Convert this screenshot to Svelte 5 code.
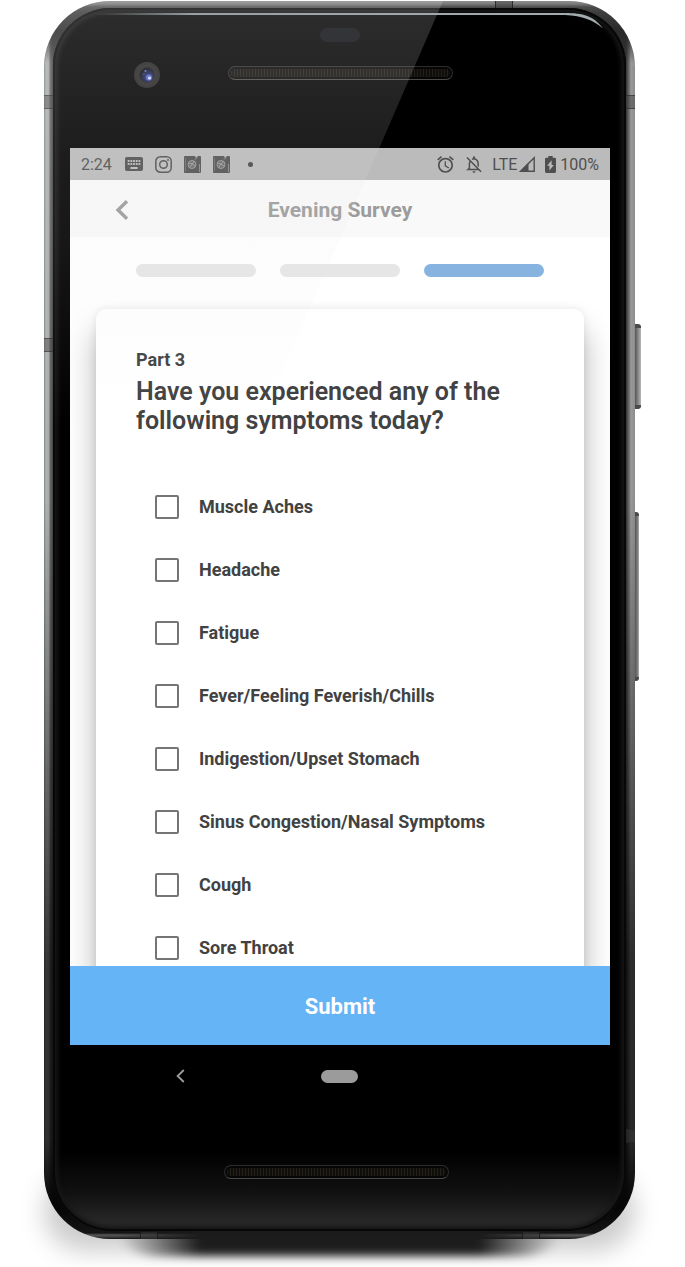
<script>
  const symptoms = [
    'Muscle Aches',
    'Headache',
    'Fatigue',
    'Fever/Feeling Feverish/Chills',
    'Indigestion/Upset Stomach',
    'Sinus Congestion/Nasal Symptoms',
    'Cough',
    'Sore Throat'
  ];
  const steps = [1, 2, 3];
  const current = 3;
  let selected = $state([]);
</script>

<main class="stage">
  <div class="phone">
    <div class="side power"></div>
    <div class="side volume"></div>
    <div class="glass">
      <div class="top-bezel">
        <div class="sensor"></div>
        <div class="camera-row">
          <svg class="camera" viewBox="0 0 26 26" aria-hidden="true">
            <defs>
              <radialGradient id="lens" cx="60%" cy="65%" r="60%">
                <stop offset="0" stop-color="#4450a8" />
                <stop offset="0.5" stop-color="#1c2250" />
                <stop offset="1" stop-color="#0c0d14" />
              </radialGradient>
            </defs>
            <circle cx="13" cy="13" r="13" fill="#262424" />
            <circle cx="13" cy="13" r="9.5" fill="none" stroke="#2e2c2c" />
            <circle cx="13" cy="13" r="7.5" fill="url(#lens)" />
            <circle cx="15" cy="15.5" r="3" fill="#5567d0" />
            <circle cx="15.5" cy="16" r="1.6" fill="#d3dcff" />
            <circle cx="11.5" cy="9" r="1.1" fill="#5b70c0" />
            <circle cx="10" cy="12" r="0.8" fill="#3a4c98" />
          </svg>
          <div class="speaker"></div>
        </div>
      </div>

      <section class="screen">
        <div class="status">
          <span class="clock">2:24</span>
          <svg width="18" height="14" viewBox="2 5 20 14" preserveAspectRatio="none" aria-hidden="true"><path fill="currentColor" d="M20 5H4c-1.1 0-1.99.9-1.99 2L2 17c0 1.1.9 2 2 2h16c1.1 0 2-.9 2-2V7c0-1.1-.9-2-2-2zm-9 3h2v2h-2V8zm0 3h2v2h-2v-2zM8 8h2v2H8V8zm0 3h2v2H8v-2zm-1 2H5v-2h2v2zm0-3H5V8h2v2zm9 7H8v-2h8v2zm0-4h-2v-2h2v2zm0-3h-2V8h2v2zm3 3h-2v-2h2v2zm0-3h-2V8h2v2z" /></svg>
          <svg width="17" height="17" viewBox="0 0 17 17" fill="none" stroke="currentColor" stroke-width="1.5" aria-hidden="true"><rect x="0.8" y="0.8" width="15.4" height="15.4" rx="4.5" /><circle cx="8.5" cy="8.5" r="3.8" /><circle cx="13" cy="4.1" r="1" fill="currentColor" stroke="none" /></svg>
          {#each [1, 2] as n (n)}
            <svg width="17" height="17" viewBox="0 0 17 17" aria-hidden="true">
              <path fill="currentColor" d="M1 0h10l1 2 2-2h2a1 1 0 0 1 1 1v15a1 1 0 0 1-1 1H1a1 1 0 0 1-1-1V1a1 1 0 0 1 1-1z" />
              <circle cx="8" cy="8.5" r="4" fill="#666" stroke="#9a9a9a" stroke-width="1" />
              <path d="M5 7l3 1 3-3M6 11l2-3 3 2M11 3.5l2-2" stroke="#a5a5a5" stroke-width="0.9" fill="none" />
              <path d="M15.500 8v8" stroke="#8d8d8d" stroke-width="0.900" />
              <path d="M1.5 2v13" stroke="#777" stroke-width="0.8" />
            </svg>
          {/each}
          <span class="dot"></span>
          <span class="spacer"></span>
          <svg width="17" height="17" viewBox="2 1.8 20 20.4" aria-hidden="true"><path fill="currentColor" d="M22 5.72l-4.6-3.86-1.29 1.53 4.6 3.86L22 5.72zM7.88 3.39L6.6 1.86 2 5.71l1.29 1.53 4.59-3.85zM12.5 8H11v6l4.75 2.85.75-1.23-4-2.37V8zM12 4c-4.97 0-9 4.03-9 9s4.02 9 9 9c4.97 0 9-4.03 9-9s-4.03-9-9-9zm0 16c-3.87 0-7-3.13-7-7s3.13-7 7-7 7 3.13 7 7-3.13 7-7 7z" /></svg>
          <svg width="16" height="17" viewBox="0 0 16 17" fill="none" stroke="currentColor" stroke-width="1.5" aria-hidden="true"><path d="M1 1.5l14 14.3M3.9 5.6c-.4.8-.5 1.500-.5 2.400v4.300L2 13.500h10.500M6 3.300C7 2.700 9 2.600 10.300 3.600c1.400 1 1.900 2.500 1.900 4.400v2.500" /><path d="M8 .5v2" stroke-width="2" /><path d="M6.500 15.200h3a1.500 1.500 0 0 1-3 0z" fill="currentColor" stroke="none" /></svg>
          <span class="network">LTE
            <svg width="16" height="16" viewBox="0 0 16 16" aria-hidden="true"><path d="M1.800 15.200H15.200V1.800z" fill="none" stroke="currentColor" stroke-width="1.400" /><path d="M0 16L9.500 6.500V16z" fill="currentColor" /></svg>
          </span>
          <span class="battery">
            <svg width="11" height="17" viewBox="7 2 10 20" preserveAspectRatio="none" aria-hidden="true"><path fill="currentColor" d="M15.67 4H14V2h-4v2H8.33C7.6 4 7 4.6 7 5.33v15.33C7 21.4 7.6 22 8.33 22h7.33c.74 0 1.34-.6 1.34-1.33V5.33C17 4.6 16.4 4 15.67 4zM11 19v-5.500H9L13 7v5.500h2L11 19z" /></svg>
            100%
          </span>
        </div>

        <header class="bar">
          <button class="back" type="button" aria-label="Back">
            <svg width="14" height="20" viewBox="0 0 14 20" fill="none" stroke="currentColor" stroke-width="3.400" aria-hidden="true"><path d="M12 1.200L3 10l9 8.800" /></svg>
          </button>
          <h1>Evening Survey</h1>
        </header>

        <div class="content">
          <div class="progress">
            {#each steps as step (step)}
              <span class:active={step === current}></span>
            {/each}
          </div>
          <form class="card" id="survey">
            <p class="part">Part {current}</p>
            <h2>Have you experienced any of the following symptoms today?</h2>
            <div class="options">
              {#each symptoms as symptom (symptom)}
                <label>
                  <input type="checkbox" value={symptom} bind:group={selected} />
                  <span>{symptom}</span>
                </label>
              {/each}
            </div>
          </form>
        </div>
        <button class="submit" type="submit" form="survey">Submit</button>
      </section>

      <div class="bottom-bezel">
        <div class="softkeys">
          <button type="button" aria-label="System back">
            <svg width="9" height="14" viewBox="0 0 9 14" fill="none" stroke="currentColor" stroke-width="1.800" aria-hidden="true"><path d="M7.800 1L1.600 7l6.200 6" /></svg>
          </button>
          <button class="home" type="button" aria-label="Home"></button>
          <span></span>
        </div>
        <div class="speaker"></div>
      </div>
    </div>
    <div class="band left b1"></div>
    <div class="band left b2"></div>
    <div class="band right b1"></div>
    <div class="band right b3"></div>
    <div class="band top"></div>
    <div class="band bottom b4"></div>
    <div class="band bottom b5"></div>
    <div class="gloss"></div>
    <div class="shine"></div>
    <svg class="shine-end" viewBox="0 0 38 16" aria-hidden="true"><path d="M0 0C18 0 29 3 38 15.500 28 7 18 3 0 2z" fill="#a2acae" /></svg>
  </div>
</main>

<style>
  :global(body) {
    background: #fff;
  }
  * {
    box-sizing: border-box;
  }
  .stage {
    padding: 1px 50px 27px 44px;
    overflow: hidden;
    font-family: Roboto, 'Liberation Sans', sans-serif;
    color: #424242;
  }
  button {
    font: inherit;
    border: 0;
    padding: 0;
    background: none;
    color: inherit;
    display: block;
  }
  h1,
  h2,
  p {
    margin: 0;
  }

  /* Metal frame */
  .phone {
    position: relative;
    z-index: 0;
    padding: 7px 9px 8px;
    border-radius: 66px;
    background:
      linear-gradient(to top, #1c1c1c 0, #4a4a4a 2px, #6c6c6c 4px, #1a1a1a 6px, #080808 30px, transparent 100px),
      linear-gradient(#8c9090 0, #7a7a7a 3px, #4c4c4c 6px, #3c3c3c 12px, #2a2a2a 30px, transparent 62px),
      linear-gradient(transparent 40%, rgba(0, 0, 0, 0.7) 78%, rgba(0, 0, 0, 0.75)),
      linear-gradient(to right, #808585 0, #b2b5b5 2px, #a6a9a9 5px, #686a6a 6px, #444 9px, #222 50%, #333 calc(100% - 9px), #6c6c6c calc(100% - 6px), #9a9a9a calc(100% - 4px), #8c8c8c 100%);
  }
  .phone::before,
  .phone::after {
    content: '';
    position: absolute;
    z-index: -2;
  }
  .phone::before {
    left: 76px;
    right: 76px;
    bottom: -17px;
    height: 40px;
    border-radius: 40px / 20px;
    background: linear-gradient(to right, transparent, #222 80px, #222 calc(100% - 80px), transparent);
    filter: blur(4px);
  }
  .phone::after {
    left: 0;
    right: 0;
    bottom: -12px;
    height: 80px;
    border-radius: 40px;
    background: rgba(0, 0, 0, 0.2);
    filter: blur(12px);
  }
  .glass {
    border-radius: 58px;
    background: linear-gradient(to top, #2e2e2e 0, #242424 14px, #121212 36px, #000 80px);
    box-shadow:
      inset 0 0 0 2px #070707,
      inset 0 0 4px 5px #161616;
  }
  .side {
    position: absolute;
    z-index: -1;
    left: 100%;
    border-radius: 0 3px 3px 0;
    border-block: 4px solid #4a4a4a;
    background: linear-gradient(to right, #555, #858585 3px, #b5b8b8);
  }
  .power {
    top: 323px;
    width: 6px;
    height: 85px;
  }
  .volume {
    top: 511px;
    width: 4px;
    height: 169px;
  }
  .band {
    position: absolute;
    width: 9px;
    height: 14px;
    background: rgba(60, 60, 60, 0.45);
    border-block: 1px solid rgba(30, 30, 30, 0.5);
  }
  .left { left: 0; }
  .right { right: 0; }
  .b1 { top: 94px; }
  .b2 { top: 337px; }
  .b3 { bottom: 96px; }
  .top,
  .bottom {
    width: 18px;
    height: 7px;
    border-block: 0;
    border-inline: 1px solid rgba(20, 20, 20, 0.7);
  }
  .top { top: 0; right: 122px; }
  .bottom { bottom: 0; }
  .b4 { left: 96px; }
  .b5 { right: 95px; }
  .gloss {
    position: absolute;
    inset: 0 0 auto;
    height: 430px;
    border-top-left-radius: 66px;
    clip-path: polygon(0 0, 67.5% 0, 36% 100%, 0 100%);
    background: linear-gradient(rgba(226, 226, 226, 0.2), rgba(226, 226, 226, 0.13) 150px, rgba(226, 226, 226, 0.1) 240px, rgba(226, 226, 226, 0));
    pointer-events: none;
  }
  .shine {
    position: absolute;
    top: 12px;
    left: 50px;
    right: 69px;
    height: 2px;
    background: linear-gradient(to right, transparent, #98a2a4 100px, #a2acae);
  }
  .shine-end {
    position: absolute;
    top: 12px;
    right: 32px;
    width: 38px;
    height: 16px;
  }

  /* Bezels */
  .top-bezel {
    height: 140px;
    padding-top: 20px;
  }
  .sensor {
    width: 40px;
    height: 14px;
    margin: 0 auto;
    border-radius: 7px;
    background: #0c0d11;
  }
  .camera-row {
    display: grid;
    grid-template-columns: 1fr 224px 1fr;
    align-items: center;
    margin-top: 20px;
  }
  .camera {
    width: 26px;
    height: 26px;
    margin-left: 81px;
  }
  .speaker {
    width: 225px;
    height: 14px;
    border: 1px solid #2c2c2c;
    border-bottom-color: #4c4a46;
    border-radius: 7px;
    background: repeating-linear-gradient(to right, #100e0b 0 2px, #231f19 2px 3px);
    box-shadow: inset 0 0 0 2px #060606;
  }
  .camera-row .speaker {
    margin-top: -4px;
  }
  .bottom-bezel {
    height: 186px;
    padding: 24px 17px 0;
  }
  .softkeys {
    display: grid;
    grid-template-columns: 1fr 37px 1fr;
    align-items: center;
    color: #9b9b9b;
  }
  .softkeys button:first-child {
    padding-left: 106px;
  }
  .softkeys svg {
    display: block;
  }
  .home {
    height: 13px;
    border-radius: 7px;
    background: #9b9b9b;
  }
  .bottom-bezel .speaker {
    margin: 82px auto 0 154px;
  }

  /* Survey screen */
  .screen {
    margin: 0 16px 0 17px;
    background: #fff;
    display: flex;
    flex-direction: column;
  }
  .status {
    display: flex;
    align-items: center;
    gap: 12px;
    height: 32px;
    padding: 0 11px;
    background: #bbb;
    color: #4f4f4f;
    font-size: 16px;
  }
  .status svg {
    flex: none;
  }
  .clock {
    width: 32px;
    white-space: nowrap;
  }
  .dot {
    width: 5px;
    height: 5px;
    margin-left: 6px;
    border-radius: 50%;
    background: #444;
  }
  .spacer {
    flex: 1;
  }
  .network,
  .battery {
    display: flex;
    align-items: center;
    gap: 4px;
    margin-left: -2px;
  }
  .network {
    gap: 2px;
  }
  .bar {
    display: grid;
    grid-template-columns: 46px 1fr 46px;
    align-items: center;
    height: 57px;
    padding-top: 2px;
    background: #f9f9f9;
    color: #9c9c9c;
  }
  .back {
    padding-left: 45px;
  }
  .back svg {
    display: block;
  }
  h1 {
    font-size: 21px;
    line-height: 28px;
    font-weight: 700;
    text-align: center;
  }
  .content {
    overflow: hidden;
    padding: 27px 26px 0;
  }
  .progress {
    display: flex;
    gap: 24px;
    padding: 0 40px;
  }
  .progress span {
    flex: 1;
    height: 13px;
    border-radius: 7px;
    background: #e6e6e6;
  }
  .progress .active {
    background: #86b3df;
  }
  .card {
    margin: 32px 0 -13px;
    padding: 40px 40px 0;
    border-radius: 10px;
    background: #fff;
    box-shadow: 0 22px 30px rgba(0, 0, 0, 0.3), 0 0 8px rgba(0, 0, 0, 0.08);
  }
  .part {
    font-size: 18px;
    line-height: 22px;
    font-weight: 700;
  }
  h2 {
    margin-top: 6px;
    font-size: 25px;
    line-height: 29px;
    font-weight: 600;
  }
  .options {
    padding: 40px 0 0 19px;
  }
  label {
    display: flex;
    align-items: center;
    gap: 20px;
    height: 63px;
    font-size: 18px;
    font-weight: 700;
  }
  input {
    appearance: none;
    flex: none;
    width: 24px;
    height: 24px;
    margin: 0;
    border: 2px solid #757575;
    border-radius: 2px;
    background: #fff;
  }
  input:checked {
    background: #64b5f6;
  }
  .submit {
    position: relative;
    height: 79px;
    padding-top: 2px;
    background: #64b4f6;
    color: #fff;
    font-size: 22px;
    font-weight: 700;
  }
</style>
